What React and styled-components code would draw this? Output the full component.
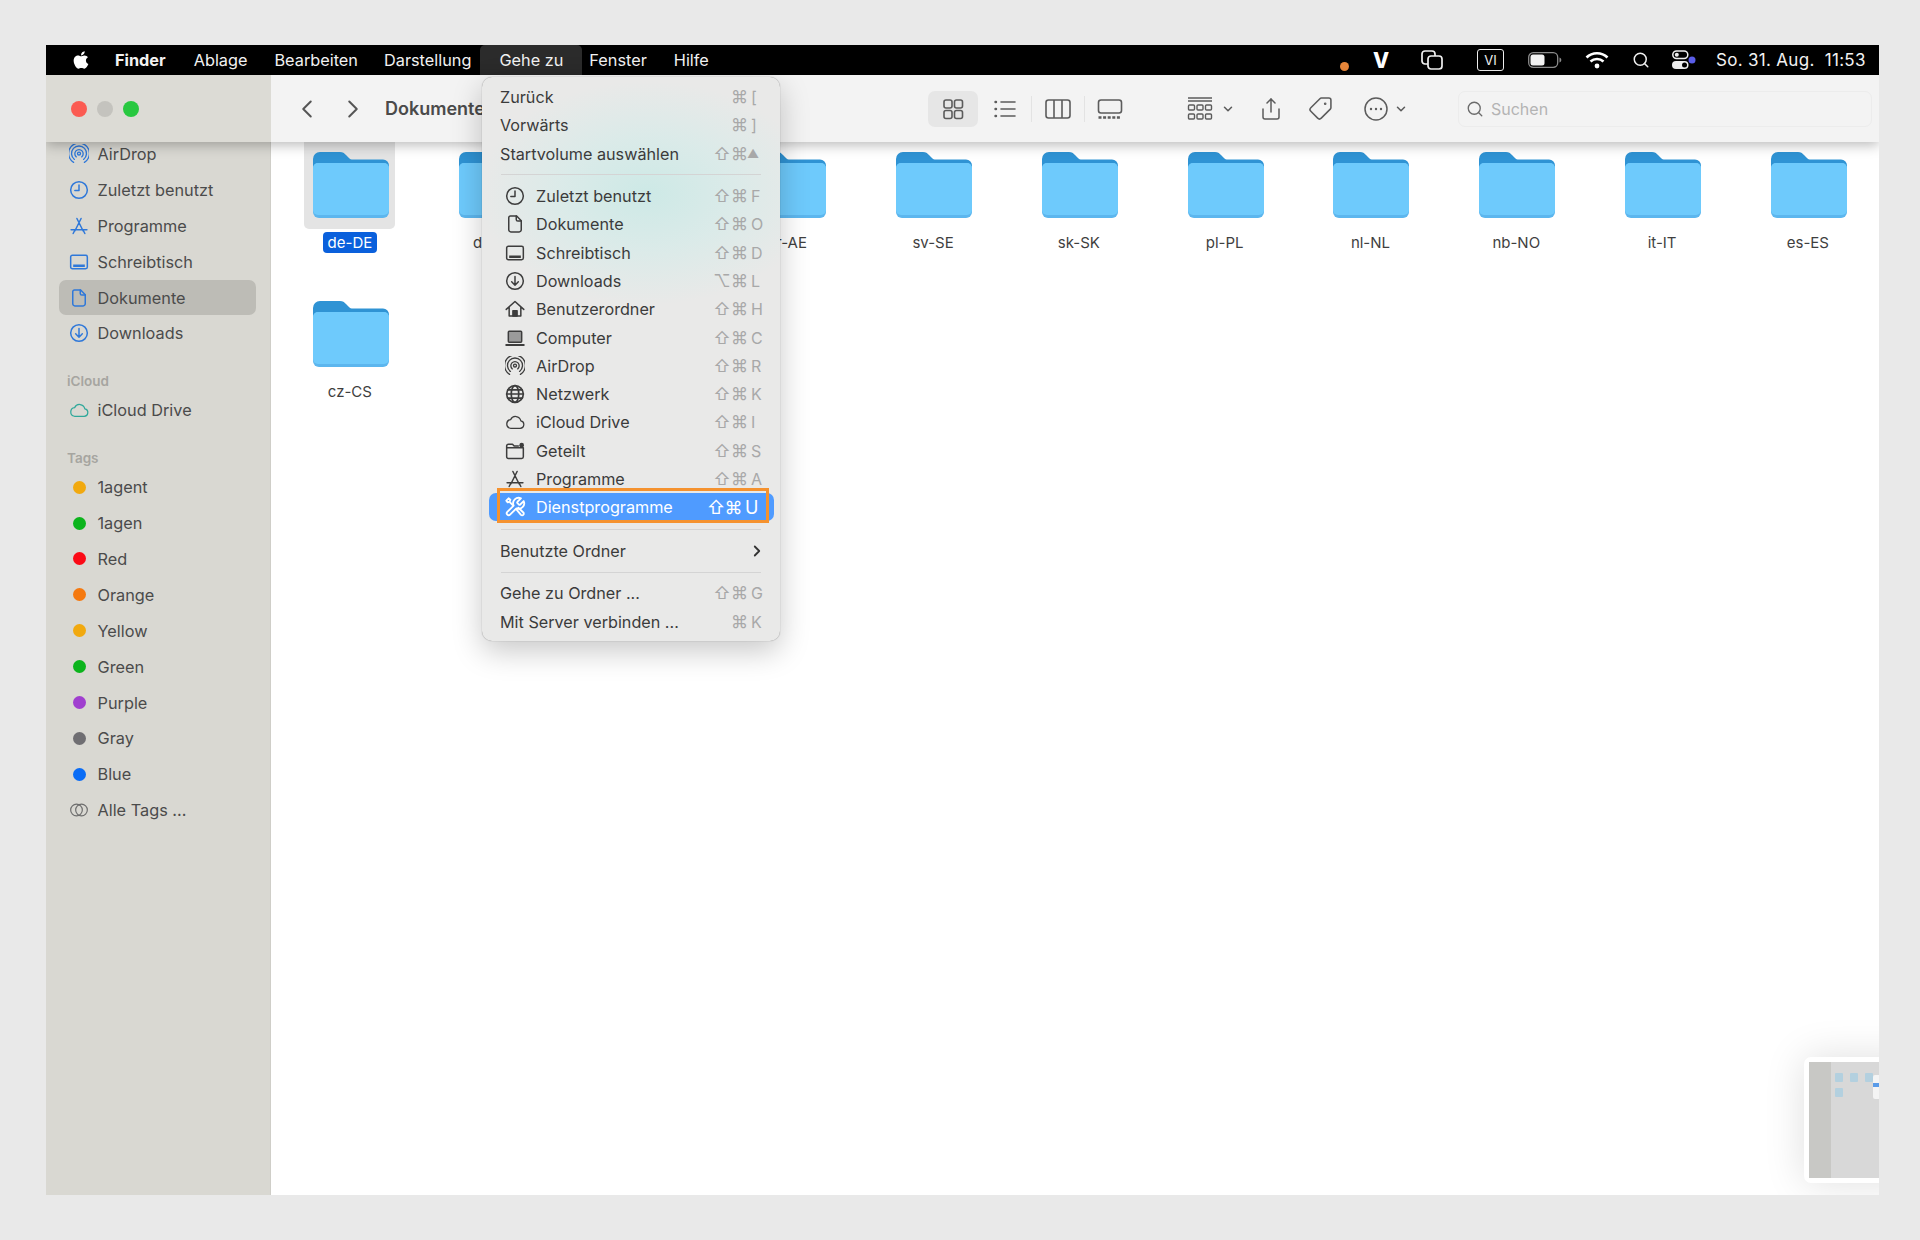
import React from 'react';
import styled, { createGlobalStyle } from 'styled-components';
import { FaApple } from 'react-icons/fa';
import { ChevronLeft, ChevronRight, ChevronDown, Search, Share, Tag } from 'lucide-react';

const GlobalStyle = createGlobalStyle`
  html, body {
    margin: 0;
    padding: 0;
    background: #e9e9e9;
  }
  body {
    font-family: 'Inter', 'DejaVu Sans', sans-serif;
    -webkit-font-smoothing: antialiased;
  }
`;

const Page = styled.div`
  box-sizing: border-box;
  width: 1920px;
  height: 1240px;
  padding: 45px 41px 45px 46px;
  background: #e9e9e9;
`;

const Window = styled.div`
  position: relative;
  height: 100%;
  display: flex;
  flex-direction: column;
  overflow: hidden;
  background: #fff;
`;

/* menu bar */
const MenuBar = styled.div`
  flex: 0 0 30px;
  display: flex;
  align-items: center;
  background: #000;
  color: #f2f2f2;
  font-size: 16.3px;
  padding-right: 13px;
`;

const AppleMark = styled.span`
  display: flex;
  margin-left: 25px;
  margin-right: 24px;
  color: #fff;
  font-size: 20px;
`;

const BarItem = styled.span`
  display: flex;
  align-items: center;
  height: 30px;
  padding: 0 ${p => p.$pad ?? 0}px;
  font-weight: ${p => (p.$bold ? 700 : 400)};
  background: ${p => (p.$open ? '#2b2b2b' : 'transparent')};
  border-radius: ${p => (p.$open ? '5px 5px 0 0' : '0')};
  margin-right: ${p => p.$after ?? 0}px;
`;

const StatusArea = styled.div`
  margin-left: auto;
  display: flex;
  align-items: center;
`;

const StatusItem = styled.span`
  display: flex;
  align-items: center;
  justify-content: center;
  flex: 0 0 ${p => p.$w}px;
  margin-left: ${p => p.$gap ?? 0}px;
  color: #f0f0f0;
`;

const OrangeDot = styled.span`
  display: block;
  width: 9px;
  height: 9px;
  margin-top: 12px;
  border-radius: 50%;
  background: #e9873a;
`;

const VBadge = styled.span`
  font-size: 21px;
  font-weight: 800;
  color: #fff;
`;

const ViBadge = styled.span`
  box-sizing: border-box;
  display: flex;
  align-items: center;
  justify-content: center;
  width: 27px;
  height: 22px;
  border: 1.5px solid #eee;
  border-radius: 3px;
  font-size: 13px;
`;

const Clock = styled.span`
  margin-left: 20px;
  flex: 0 0 150px;
  white-space: pre;
  font-size: 17px;
  letter-spacing: 0.3px;
`;

/* window chrome */
const TopRow = styled.div`
  position: relative;
  z-index: 2;
  flex: 0 0 67px;
  display: flex;
  box-shadow: 0 3px 12px rgba(0, 0, 0, 0.28);
`;

const SidebarHead = styled.div`
  flex: 0 0 225px;
  display: flex;
  align-items: center;
  gap: 10px;
  padding-left: 25px;
  box-sizing: border-box;
  background: #dcdbd5;
`;

const Light = styled.span`
  width: 16px;
  height: 16px;
  border-radius: 50%;
  background: ${p => p.$c};
`;

const Toolbar = styled.div`
  flex: 1;
  display: flex;
  align-items: center;
  background: #f3f3f3;
  color: #5c5c5c;
`;

const NavIcon = styled.span`
  display: flex;
  margin-left: ${p => p.$gap}px;
  color: #555;
`;

const Title = styled.span`
  margin-left: 17px;
  flex: 0 0 543px;
  font-size: 18px;
  font-weight: 600;
  color: #4a4a4a;
`;

const ToolButton = styled.span`
  flex: 0 0 auto;
  box-sizing: border-box;
  display: flex;
  align-items: center;
  justify-content: center;
  gap: ${p => p.$inner ?? 8}px;
  width: ${p => p.$w}px;
  height: 36px;
  margin-left: ${p => p.$gap ?? 0}px;
  border-radius: 7px;
  background: ${p => (p.$active ? '#e6e6e6' : 'transparent')};
`;

const ToolDivider = styled.span`
  flex: 0 0 1px;
  height: 26px;
  margin-left: 1px;
  background: #e3e3e3;
`;

const SearchBox = styled.div`
  flex: 0 0 414px;
  box-sizing: border-box;
  height: 36px;
  margin-left: 43px;
  display: flex;
  align-items: center;
  gap: 7px;
  padding-left: 7px;
  border: 1px solid #ececec;
  border-radius: 7px;
  color: #6b6b6b;
  font-size: 16px;

  span {
    color: #b4b4b4;
  }
`;

/* content */
const Content = styled.div`
  flex: 1;
  display: flex;
  min-height: 0;
`;

const Sidebar = styled.nav`
  flex: 0 0 225px;
  box-sizing: border-box;
  padding: 0 14px 0 13px;
  background: #d9d8d2;
  overflow: hidden;
  border-right: 1px solid #cfcec8;
`;

const SidebarList = styled.div`
  margin-top: -6px;
`;

const SideHeading = styled.div`
  box-sizing: border-box;
  height: ${p => p.$h}px;
  padding-top: ${p => p.$h - 20}px;
  padding-left: 8px;
  line-height: 18px;
  font-size: 13.5px;
  font-weight: 600;
  color: #a6a5a0;
`;

const SideRow = styled.div`
  box-sizing: border-box;
  height: 35.9px;
  display: flex;
  align-items: center;
  gap: 8.5px;
  padding-left: 10px;
  border-radius: 7px;
  font-size: 16.3px;
  color: #4b4b4b;
  background: ${p => (p.$active ? '#bdbcb6' : 'transparent')};
`;

const SideIcon = styled.span`
  flex: 0 0 20px;
  min-width: 0;
  height: 20px;
  display: flex;
  align-items: center;
  justify-content: center;
  color: ${p => p.$c || '#2f78d9'};
`;

const TagDot = styled.span`
  width: 13px;
  height: 13px;
  border-radius: 50%;
  background: ${p => p.$c};
`;

const FileArea = styled.main`
  flex: 1;
  padding-left: 6px;
  display: grid;
  grid-template-columns: repeat(11, 145.8px);
  grid-auto-rows: 149px;
  align-content: start;
  overflow: hidden;
  background: #fff;
`;

const FileCell = styled.div`
  display: flex;
  flex-direction: column;
  align-items: center;
`;

const FolderBox = styled.div`
  box-sizing: border-box;
  width: 91px;
  height: 87px;
  padding: 10px 0 0 2px;
  display: flex;
  justify-content: center;
  border-radius: 0 0 5px 5px;
  background: ${p => (p.$selected ? '#e4e4e4' : 'transparent')};
`;

const FileName = styled.span`
  margin-top: 3px;
  height: 21px;
  line-height: 21px;
  padding: 0 5px;
  border-radius: 4px;
  font-size: 15px;
  color: ${p => (p.$selected ? '#fff' : '#3f3f3f')};
  background: ${p => (p.$selected ? '#0a60dc' : 'transparent')};
`;

/* Gehe zu menu */
const Dropdown = styled.div`
  position: absolute;
  z-index: 5;
  left: 436px;
  top: 32px;
  box-sizing: border-box;
  width: 298px;
  height: 564px;
  padding-top: 6px;
  border-radius: 10px;
  background:
    radial-gradient(ellipse 170px 112px at 165px 116px, #cde9e6 0%, rgba(214, 235, 233, 0.75) 50%, rgba(233, 233, 233, 0) 100%),
    #e9e9e8;
  box-shadow: 0 0 1px rgba(0, 0, 0, 0.45), 0 10px 30px rgba(0, 0, 0, 0.22);
`;

const MenuRow = styled.div`
  position: relative;
  height: 28.3px;
  margin: ${p => (p.$hot ? '0 6px 0 7px' : '0')};
  padding: 0 10px 0 ${p => (p.$hot ? 11 : 18)}px;
  display: flex;
  align-items: center;
  font-size: 16.2px;
  color: ${p => (p.$hot ? '#fff' : '#3b3b3b')};
  background: ${p => (p.$hot ? '#4f9bff' : 'transparent')};
  border-radius: 7px;
`;

const MenuIcon = styled.span`
  flex: 0 0 30px;
  margin-right: 6px;
  display: flex;
  align-items: center;
  justify-content: center;
  color: ${p => (p.$hot ? '#fff' : '#3d3d3d')};
`;

const Shortcut = styled.span`
  margin-left: auto;
  display: grid;
  grid-template-columns: 20px 15px 23px;
  align-items: center;
  justify-items: center;
  font-size: ${p => (p.$hot ? 18 : 17)}px;
  color: ${p => (p.$hot ? '#fff' : '#a8a8a8')};

  span:last-child {
    justify-self: start;
    padding-left: 4px;
    font-size: ${p => (p.$hot ? 18 : 16)}px;
  }
`;

const EjectKey = styled.b`
  display: block;
  margin-left: -4px;
  font-size: 12px;
  font-weight: 400;
`;

const MenuSep = styled.div`
  height: ${p => p.$h}px;
  display: flex;
  align-items: center;
  padding: 0 19px;

  &::before {
    content: '';
    flex: 1;
    height: 1px;
    background: #d4d4d4;
  }
`;

const Callout = styled.div`
  position: absolute;
  left: 8px;
  right: 5.5px;
  top: -5px;
  bottom: -1.5px;
  border: 3.5px solid #f5922f;
  pointer-events: none;
`;

const SubArrow = styled.span`
  margin-left: auto;
  display: flex;
  padding-right: 4px;
  color: #333;
`;

/* little preview in the corner */
const Preview = styled.div`
  position: absolute;
  z-index: 3;
  right: -42px;
  bottom: 12px;
  width: 117px;
  height: 126px;
  box-sizing: border-box;
  display: flex;
  border: 5px solid #fff;
  border-radius: 7px;
  background: #d8d8d8;
  box-shadow: 0 0 40px rgba(0, 0, 0, 0.13);
`;

const PreviewSide = styled.div`
  flex: 0 0 22px;
  background: #c8c8c5;
  filter: blur(0.6px);
`;

const PreviewFiles = styled.div`
  flex: 1;
  padding: 11px 0 0 4px;
  display: grid;
  grid-template-columns: repeat(3, 15px);
  grid-auto-rows: 15px;
  filter: blur(0.7px);
`;

const PreviewFolder = styled.span`
  width: 8px;
  height: 9px;
  border-radius: 1px;
  background: #b3d0df;
`;

const PreviewMenu = styled.div`
  position: absolute;
  left: 64px;
  top: 13px;
  width: 20px;
  height: 24px;
  padding-top: 8px;
  box-sizing: border-box;
  background: #f4f4f4;
  border-radius: 2px;

  &::before {
    content: '';
    display: block;
    height: 4px;
    background: #5a9be8;
  }
`;

/* drawings */
const Svg = ({ size = 20, sw = 1.8, children }) => (
  <svg width={size} height={size} viewBox="0 0 24 24" fill="none" stroke="currentColor" strokeWidth={sw} strokeLinecap="round" strokeLinejoin="round">
    {children}
  </svg>
);

const Icons = {
  airdrop: (p) => (
    <Svg {...p} sw={1.6}>
      <circle cx="12" cy="11.5" r="1.8" />
      <path d="M8.8 15.5a5 5 0 1 1 6.4 0" />
      <path d="M6.5 18.5a9 9 0 1 1 11 0" />
      <path d="M5.5 22a12.5 12.5 0 1 1 13 0" />
    </Svg>
  ),
  clock: (p) => (
    <Svg {...p}>
      <circle cx="12" cy="12" r="10" />
      <path d="M12 6v6.5H7" />
    </Svg>
  ),
  apps: (p) => (
    <Svg {...p}>
      <path d="M9.5 3l7.5 15M14.5 3L7 18M2.5 16.5h19M5 21l1.5-3M19 21l-1.500-3" />
    </Svg>
  ),
  desktop: (p) => (
    <Svg {...p}>
      <rect x="2" y="4" width="20" height="16" rx="2" />
      <path d="M5 16.5h14" strokeWidth="3" strokeLinecap="butt" />
    </Svg>
  ),
  doc: (p) => (
    <Svg {...p}>
      <path d="M6.5 2.5H14L19.5 8v11a2.5 2.5 0 0 1-2.5 2.5H7A2.5 2.5 0 0 1 4.5 19V4.5a2 2 0 0 1 2-2z" />
      <path d="M13.5 2.5v4a2 2 0 0 0 2 2h4" />
    </Svg>
  ),
  download: (p) => (
    <Svg {...p}>
      <circle cx="12" cy="12" r="10" />
      <path d="M12 6.5V17M8 13l4 4 4-4" />
    </Svg>
  ),
  cloud: (p) => (
    <Svg {...p} sw={1.5}>
      <path d="M6.5 19.5H18a4.5 4.5 0 0 0 1-8.9 6.5 6.5 0 0 0-12.3-1.400A5.200 5.200 0 0 0 6.500 19.500z" />
    </Svg>
  ),
  tags: (p) => (
    <Svg {...p}>
      <circle cx="9" cy="12" r="7" />
      <circle cx="15" cy="12" r="7" />
    </Svg>
  ),
  home: (p) => (
    <Svg {...p}>
      <path d="M1.5 12.5L12 3l10.5 9.5M5 10v10.5h14V10" />
      <rect x="9.5" y="14" width="5" height="6.5" fill="currentColor" />
    </Svg>
  ),
  computer: (p) => (
    <Svg {...p}>
      <rect x="4" y="4" width="16" height="13" rx="1" fill="#9b9b9b" />
      <path d="M1.5 20.5h21" strokeWidth="2.4" />
    </Svg>
  ),
  globe: (p) => (
    <Svg {...p} sw={2}>
      <circle cx="12" cy="12" r="10" />
      <path d="M2 12h20M3.5 7h17M3.5 17h17" />
      <ellipse cx="12" cy="12" rx="4.5" ry="10" />
    </Svg>
  ),
  shared: (p) => (
    <Svg {...p}>
      <path d="M2 8V6a2 2 0 0 1 2-2h5l2 2h5M2 8h20v11a2 2 0 0 1-2 2H4a2 2 0 0 1-2-2V8z" />
      <circle cx="20" cy="5" r="2.8" fill="currentColor" stroke="none" />
    </Svg>
  ),
  tools: (p) => (
    <Svg {...p} sw={2}>
      <path d="M14.7 6.3a1 1 0 0 0 0 1.4l1.6 1.6a1 1 0 0 0 1.4 0l3.77-3.77a6 6 0 0 1-7.94 7.94l-6.91 6.91a2.12 2.12 0 0 1-3-3l6.91-6.91a6 6 0 0 1 7.94-7.94l-3.76 3.76z" />
      <path d="M13.5 14.5l5 6a1.8 1.8 0 0 0 2.6-2.5l-5.5-5.2M9.5 9.8L6 6.3l1-2.3-2-1.5-2.5 2.5 1.500 2 2.300-1" />
    </Svg>
  ),
};

const FolderIcon = () => (
  <svg width="76" height="66" viewBox="0 0 76 66">
    <path d="M0 7a7 7 0 0 1 7-7h20c3 0 4 1 6 3l3 3c1 1 2 1.500 4 1.500h30a6 6 0 0 1 6 6V30H0z" fill="#2f93d4" />
    <path d="M0 16a5 5 0 0 1 5-5h66a5 5 0 0 1 5 5v44a6 6 0 0 1-6 6H6a6 6 0 0 1-6-6z" fill="#5cb6ee" />
    <path d="M0 16a5 5 0 0 1 5-5h66a5 5 0 0 1 5 5v42a5 5 0 0 1-5 5H5a5 5 0 0 1-5-5z" fill="#6ecafc" />
  </svg>
);

const GridIcon = () => (
  <svg width="24" height="24" viewBox="0 0 24 24" fill="none" stroke="currentColor" strokeWidth="1.6">
    <rect x="3" y="3" width="8" height="8" rx="2" />
    <rect x="13.5" y="3" width="8" height="8" rx="2" />
    <rect x="3" y="13.5" width="8" height="8" rx="2" />
    <rect x="13.5" y="13.5" width="8" height="8" rx="2" />
  </svg>
);

const ListIcon = () => (
  <svg width="24" height="24" viewBox="0 0 24 24" fill="none" stroke="currentColor" strokeWidth="1.6" strokeLinecap="round">
    <path d="M8 5h14M8 12h14M8 19h14" />
    <path d="M2.5 5h.5M2.5 12h.5M2.5 19h.5" strokeWidth="2.4" />
  </svg>
);

const ColumnsIcon = () => (
  <svg width="26" height="24" viewBox="0 0 26 24" fill="none" stroke="currentColor" strokeWidth="1.6">
    <rect x="1" y="3" width="24" height="18" rx="2.5" />
    <path d="M9 3v18M17 3v18" />
  </svg>
);

const GalleryIcon = () => (
  <svg width="26" height="24" viewBox="0 0 26 24" fill="none" stroke="currentColor" strokeWidth="1.6">
    <rect x="1.5" y="3" width="23" height="13" rx="2.5" />
    <path d="M1.5 20.5h23" strokeWidth="2.4" strokeDasharray="3 1.6" />
  </svg>
);

const GroupIcon = () => (
  <svg width="26" height="26" viewBox="0 0 26 26" fill="none" stroke="currentColor" strokeWidth="1.4">
    <path d="M1 2h24M1 5h24" />
    <rect x="1.5" y="9" width="6" height="5" rx="1" />
    <rect x="10" y="9" width="6" height="5" rx="1" />
    <rect x="18.5" y="9" width="6" height="5" rx="1" />
    <rect x="1.5" y="18" width="6" height="5" rx="1" />
    <rect x="10" y="18" width="6" height="5" rx="1" />
    <rect x="18.5" y="18" width="6" height="5" rx="1" />
  </svg>
);

const MoreIcon = () => (
  <svg width="26" height="26" viewBox="0 0 26 26" fill="none" stroke="currentColor" strokeWidth="1.5">
    <circle cx="13" cy="13" r="11" />
    <circle cx="8" cy="13" r="1.2" fill="currentColor" stroke="none" />
    <circle cx="13" cy="13" r="1.2" fill="currentColor" stroke="none" />
    <circle cx="18" cy="13" r="1.2" fill="currentColor" stroke="none" />
  </svg>
);

const LayersIcon = () => (
  <svg width="22" height="20" viewBox="0 0 22 20" fill="none" stroke="currentColor" strokeWidth="1.7">
    <rect x="7" y="6" width="14" height="13" rx="3" />
    <path d="M7 14H4a3 3 0 0 1-3-3V4a3 3 0 0 1 3-3h7a3 3 0 0 1 3 3v2" />
  </svg>
);

const BatteryIcon = () => (
  <svg width="34" height="18" viewBox="0 0 34 18">
    <rect x="0.7" y="1.7" width="29" height="14.6" rx="4.5" fill="none" stroke="#8c8c8c" strokeWidth="1.3" />
    <rect x="2.5" y="3.5" width="14" height="11" rx="2.5" fill="#f2f2f2" />
    <path d="M31.5 6.5c1.3.5 1.8 1.5 1.8 2.5s-.5 2-1.8 2.5z" fill="#8c8c8c" />
  </svg>
);

const WifiIcon = () => (
  <svg width="24" height="18" viewBox="0 0 24 18" fill="none" stroke="#fff" strokeWidth="2.6">
    <path d="M1.5 6.5a15 15 0 0 1 21 0" />
    <path d="M5.5 10.500a9.500 9.500 0 0 1 13 0" />
    <circle cx="12" cy="15" r="2.4" fill="#fff" stroke="none" />
  </svg>
);

const ControlIcon = () => (
  <svg width="24" height="20" viewBox="0 0 24 20">
    <rect x="0.8" y="1" width="15" height="7.5" rx="3.7" fill="none" stroke="#eee" strokeWidth="1.5" />
    <circle cx="4.8" cy="4.7" r="2" fill="#eee" />
    <rect x="0" y="11" width="16.5" height="8" rx="4" fill="#eee" />
    <circle cx="12.5" cy="15" r="2.5" fill="#000" />
    <circle cx="20" cy="10" r="3.5" fill="#5a5de8" />
  </svg>
);

const sidebarPlaces = [
  { icon: 'airdrop', label: 'AirDrop' },
  { icon: 'clock', label: 'Zuletzt benutzt' },
  { icon: 'apps', label: 'Programme' },
  { icon: 'desktop', label: 'Schreibtisch' },
  { icon: 'doc', label: 'Dokumente', active: true },
  { icon: 'download', label: 'Downloads' },
];

const sidebarTags = [
  ['1agent', '#f1a90f'],
  ['1agen', '#0cb41c'],
  ['Red', '#fb0a16'],
  ['Orange', '#f5790f'],
  ['Yellow', '#f1a90f'],
  ['Green', '#0cb41c'],
  ['Purple', '#a03fcf'],
  ['Gray', '#6f6e72'],
  ['Blue', '#0a6cf5'],
];

// third folder sits fully behind the open menu, so its name never shows
const folders = ['de-DE', 'da-DK', '', 'ar-AE', 'sv-SE', 'sk-SK', 'pl-PL', 'nl-NL', 'nb-NO', 'it-IT', 'es-ES', 'cz-CS'];

const topMenu = [
  { label: 'Zurück', keys: ['', '⌘', '['] },
  { label: 'Vorwärts', keys: ['', '⌘', ']'] },
  { label: 'Startvolume auswählen', keys: ['⇧', '⌘', <EjectKey key="eject">▲</EjectKey>] },
];

const placesMenu = [
  { icon: 'clock', label: 'Zuletzt benutzt', keys: ['⇧', '⌘', 'F'] },
  { icon: 'doc', label: 'Dokumente', keys: ['⇧', '⌘', 'O'] },
  { icon: 'desktop', label: 'Schreibtisch', keys: ['⇧', '⌘', 'D'] },
  { icon: 'download', label: 'Downloads', keys: ['⌥', '⌘', 'L'] },
  { icon: 'home', label: 'Benutzerordner', keys: ['⇧', '⌘', 'H'] },
  { icon: 'computer', label: 'Computer', keys: ['⇧', '⌘', 'C'] },
  { icon: 'airdrop', label: 'AirDrop', keys: ['⇧', '⌘', 'R'] },
  { icon: 'globe', label: 'Netzwerk', keys: ['⇧', '⌘', 'K'] },
  { icon: 'cloud', label: 'iCloud Drive', keys: ['⇧', '⌘', 'I'] },
  { icon: 'shared', label: 'Geteilt', keys: ['⇧', '⌘', 'S'] },
  { icon: 'apps', label: 'Programme', keys: ['⇧', '⌘', 'A'] },
  { icon: 'tools', label: 'Dienstprogramme', keys: ['⇧', '⌘', 'U'], hot: true },
];

const bottomMenu = [
  { label: 'Gehe zu Ordner ...', keys: ['⇧', '⌘', 'G'] },
  { label: 'Mit Server verbinden ...', keys: ['', '⌘', 'K'] },
];

const Keys = ({ keys, hot }) => (
  <Shortcut $hot={hot}>
    {keys.map((k, i) => (
      <span key={i}>{k}</span>
    ))}
  </Shortcut>
);

const GoMenu = () => (
  <Dropdown>
    {topMenu.map((item) => (
      <MenuRow key={item.label}>
        {item.label}
        <Keys keys={item.keys} />
      </MenuRow>
    ))}
    <MenuSep $h={14} />
    {placesMenu.map((item) => {
      const Icon = Icons[item.icon];
      return (
        <MenuRow key={item.label} $hot={item.hot}>
          <MenuIcon $hot={item.hot}>
            <Icon size={item.icon === 'tools' ? 22 : 20} />
          </MenuIcon>
          {item.label}
          <Keys keys={item.keys} hot={item.hot} />
          {item.hot && <Callout />}
        </MenuRow>
      );
    })}
    <MenuSep $h={15.4} />
    <MenuRow>
      Benutzte Ordner
      <SubArrow>
        <ChevronRight size={18} strokeWidth={2.4} />
      </SubArrow>
    </MenuRow>
    <MenuSep $h={14} />
    {bottomMenu.map((item) => (
      <MenuRow key={item.label}>
        {item.label}
        <Keys keys={item.keys} />
      </MenuRow>
    ))}
  </Dropdown>
);

export default function App() {
  return (
    <>
      <GlobalStyle />
      <Page>
        <Window>
          <MenuBar>
            <AppleMark>
              <FaApple />
            </AppleMark>
            <BarItem $bold $after={28}>Finder</BarItem>
            <BarItem $after={27}>Ablage</BarItem>
            <BarItem $after={26}>Bearbeiten</BarItem>
            <BarItem $after={9}>Darstellung</BarItem>
            <BarItem $open $pad={19} $after={7}>Gehe zu</BarItem>
            <BarItem $after={27}>Fenster</BarItem>
            <BarItem>Hilfe</BarItem>
            <StatusArea>
              <StatusItem $w={9}><OrangeDot /></StatusItem>
              <StatusItem $w={20} $gap={22}><VBadge>V</VBadge></StatusItem>
              <StatusItem $w={22} $gap={30}><LayersIcon /></StatusItem>
              <StatusItem $w={27} $gap={34}><ViBadge>VI</ViBadge></StatusItem>
              <StatusItem $w={34} $gap={24}><BatteryIcon /></StatusItem>
              <StatusItem $w={24} $gap={23}><WifiIcon /></StatusItem>
              <StatusItem $w={20} $gap={22}><Search size={18} strokeWidth={2} /></StatusItem>
              <StatusItem $w={24} $gap={21}><ControlIcon /></StatusItem>
              <Clock>So. 31. Aug.  11:53</Clock>
            </StatusArea>
          </MenuBar>

          <TopRow>
            <SidebarHead>
              <Light $c="#fb5b52" />
              <Light $c="#c4c3be" />
              <Light $c="#28c840" />
            </SidebarHead>
            <Toolbar>
              <NavIcon $gap={21}><ChevronLeft size={30} strokeWidth={1.6} /></NavIcon>
              <NavIcon $gap={16}><ChevronRight size={30} strokeWidth={1.6} /></NavIcon>
              <Title>Dokumente</Title>
              <ToolButton $w={50} $active><GridIcon /></ToolButton>
              <ToolButton $w={50} $gap={2}><ListIcon /></ToolButton>
              <ToolDivider />
              <ToolButton $w={50} $gap={1}><ColumnsIcon /></ToolButton>
              <ToolDivider />
              <ToolButton $w={50}><GalleryIcon /></ToolButton>
              <ToolButton $w={60} $gap={46}>
                <GroupIcon />
                <ChevronDown size={14} strokeWidth={2.6} />
              </ToolButton>
              <ToolButton $w={60}><Share size={24} strokeWidth={1.5} /></ToolButton>
              <ToolButton $w={38}><Tag size={25} strokeWidth={1.5} style={{ transform: 'rotate(90deg)' }} /></ToolButton>
              <ToolButton $w={60} $gap={16} $inner={5}>
                <MoreIcon />
                <ChevronDown size={14} strokeWidth={2.6} />
              </ToolButton>
              <SearchBox>
                <Search size={18} strokeWidth={1.8} />
                <span>Suchen</span>
              </SearchBox>
            </Toolbar>
          </TopRow>

          <Content>
            <Sidebar>
              <SidebarList>
                {sidebarPlaces.map((item) => {
                  const Icon = Icons[item.icon];
                  return (
                    <SideRow key={item.label} $active={item.active}>
                      <SideIcon><Icon size={20} /></SideIcon>
                      {item.label}
                    </SideRow>
                  );
                })}
                <SideHeading $h={41}>iCloud</SideHeading>
                <SideRow>
                  <SideIcon $c="#2fa89a"><Icons.cloud size={22} /></SideIcon>
                  iCloud Drive
                </SideRow>
                <SideHeading $h={41}>Tags</SideHeading>
                {sidebarTags.map(([label, color]) => (
                  <SideRow key={label}>
                    <SideIcon><TagDot $c={color} /></SideIcon>
                    {label}
                  </SideRow>
                ))}
                <SideRow>
                  <SideIcon $c="#6d6d6d"><Icons.tags size={20} sw={1.4} /></SideIcon>
                  Alle Tags ...
                </SideRow>
              </SidebarList>
            </Sidebar>

            <FileArea>
              {folders.map((name, i) => (
                <FileCell key={i}>
                  <FolderBox $selected={i === 0}><FolderIcon /></FolderBox>
                  <FileName $selected={i === 0}>{name}</FileName>
                </FileCell>
              ))}
            </FileArea>
          </Content>

          <GoMenu />

          <Preview>
            <PreviewSide />
            <PreviewFiles>
              <PreviewFolder />
              <PreviewFolder />
              <PreviewFolder />
              <PreviewFolder />
            </PreviewFiles>
            <PreviewMenu />
          </Preview>
        </Window>
      </Page>
    </>
  );
}
